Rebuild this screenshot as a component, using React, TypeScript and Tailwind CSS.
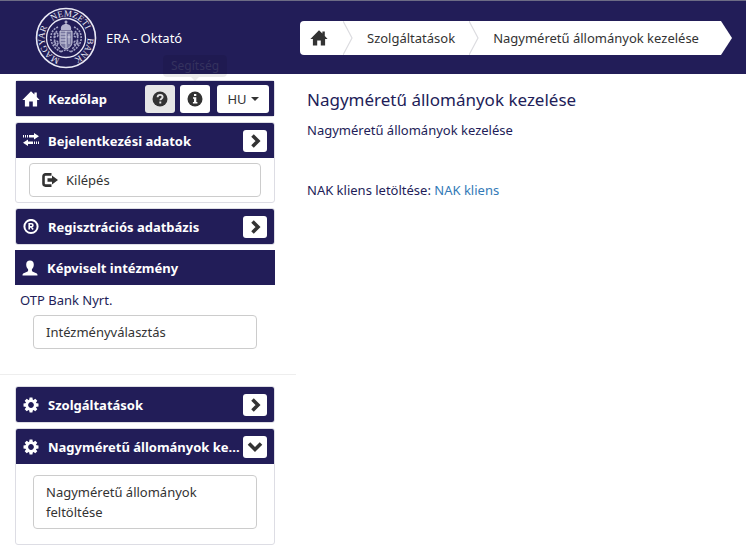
import type { ReactNode } from "react";

type IconProps = { className?: string };

function HomeIcon({ className = "" }: IconProps) {
  return (
    <svg viewBox="0 0 18 16" className={`h-4 w-[18px] shrink-0 ${className}`} fill="currentColor" aria-hidden="true">
      <path d="M9 0.3 0.4 9h2.5v6.600h4.300v-5.200h3.600v5.200h4.300V9h2.500L14.800 6V1.600h-2.400v2z" />
    </svg>
  );
}

function TransferIcon() {
  return (
    <svg viewBox="0 0 16 16" className="h-4 w-4 shrink-0" fill="currentColor" aria-hidden="true">
      <path d="M0 2h1v2.500H0zM2 2h1v2.500H2zM4 2h1v2.500H4zM6 2h5V0l5 3.200-5 3.300v-2H6zM16 8.500h-1V11h1zM14 8.500h-1V11h1zM12 8.500h-1V11h1zM10 8.500H5v-2L0 9.800 5 13v-2h5z" />
    </svg>
  );
}

function RegisteredIcon() {
  return (
    <svg viewBox="0 0 16 16" className="h-4 w-4 shrink-0" aria-hidden="true">
      <circle cx="8" cy="7.500" r="6.600" fill="none" stroke="currentColor" strokeWidth="2" />
      <path d="M6.200 10.500V4.800h2.200a1.500 1.500 0 0 1 0 3.100H6.200M8.200 7.900l1.900 2.600" fill="none" stroke="currentColor" strokeWidth="1.600" />
    </svg>
  );
}

function UserIcon() {
  return (
    <svg viewBox="0 0 16 16" className="h-4 w-4 shrink-0" fill="currentColor" aria-hidden="true">
      <path d="M8 .5c2.400 0 3.800 1.600 3.800 4 0 2-.7 3.600-1.900 4.800v1.200c0 .7.4 1 1 1.300l3.400 1.500c.8.4 1.200.9 1.200 2.200H.5c0-1.300.4-1.800 1.200-2.200l3.400-1.500c.6-.3 1-.6 1-1.300V9.300C4.900 8.100 4.200 6.500 4.200 4.500c0-2.400 1.400-4 3.800-4z" />
    </svg>
  );
}

function CogIcon() {
  return (
    <svg viewBox="-8 -8 16 16" className="h-4 w-4 shrink-0" aria-hidden="true">
      <g fill="currentColor">
        <path d="M-1.400-7.500h2.800l.6 3h-4zM-1.400 7.500h2.800l.6-3h-4z" />
        <path d="M-1.400-7.500h2.800l.6 3h-4zM-1.400 7.500h2.800l.6-3h-4z" transform="rotate(45)" />
        <path d="M-1.400-7.500h2.800l.6 3h-4zM-1.400 7.500h2.800l.6-3h-4z" transform="rotate(90)" />
        <path d="M-1.400-7.500h2.800l.6 3h-4zM-1.400 7.500h2.800l.6-3h-4z" transform="rotate(135)" />
      </g>
      <circle r="4.200" fill="none" stroke="currentColor" strokeWidth="2.600" />
    </svg>
  );
}

function LogoutIcon() {
  return (
    <svg viewBox="0 0 16 14" className="h-[14px] w-4 shrink-0" aria-hidden="true">
      <path d="M9.500 1.400H3.500a2 2 0 0 0-2 2v7.200a2 2 0 0 0 2 2h6" fill="none" stroke="currentColor" strokeWidth="2.600" />
      <path d="M5.500 5.200H10V2.500L16 7l-6 4.500V8.800H5.500z" fill="currentColor" />
    </svg>
  );
}

function QuestionIcon() {
  return (
    <svg viewBox="0 0 16 16" className="h-4 w-4" aria-hidden="true">
      <circle cx="8" cy="8" r="7.500" fill="currentColor" />
      <path d="M5.600 6.300c0-1.600 1-2.400 2.500-2.400s2.500.8 2.500 2.100c0 1.600-2.300 1.700-2.300 3.300M8.300 10.500v1.900" fill="none" stroke="#e6e6e6" strokeWidth="1.900" />
    </svg>
  );
}

function InfoIcon() {
  return (
    <svg viewBox="0 0 16 16" className="h-4 w-4" aria-hidden="true">
      <circle cx="8" cy="8" r="7.500" fill="currentColor" />
      <path d="M7 3h2.300v2H7zM6 6.300h3.300v4.600h1.100v1.500H5.900v-1.500H7V7.800H6z" fill="#fff" />
    </svg>
  );
}

function ChevronIcon({ open }: { open: boolean }) {
  return (
    <svg viewBox="0 0 16 16" className="h-4 w-4" aria-hidden="true">
      <path
        d={open ? "M2 4.500 8 10.500l6-6" : "M5.500 2.500l5.500 5.500-5.500 5.500"}
        fill="none"
        stroke="currentColor"
        strokeWidth="3.600"
      />
    </svg>
  );
}

function Seal() {
  return (
    <svg viewBox="0 0 62 62" className="h-[62px] w-[62px] shrink-0" role="img" aria-label="Magyar Nemzeti Bank">
      <defs>
        <path id="ring" d="M31 52.500a21.500 21.500 0 1 1 .01 0" />
      </defs>
      <g fill="none" stroke="#e9e9f5">
        <circle cx="31" cy="31" r="29.500" strokeWidth="1.600" />
        <circle cx="31" cy="31" r="19.500" strokeWidth="1.300" />
      </g>
      <g fill="#ececf6" fontSize="9" className="font-['Liberation_Serif',serif]">
        <text><textPath href="#ring" startOffset="6">MAGYAR</textPath></text>
        <text><textPath href="#ring" startOffset="53">NEMZETI</textPath></text>
        <text><textPath href="#ring" startOffset="101">BANK</textPath></text>
      </g>
      <g fill="none" stroke="#a5a4c6" strokeWidth="1.600" strokeDasharray="2 1">
        <path d="M23 20c-5 2-8 7-7 13 1 5 5 10 11 12" />
        <path d="M39 20c5 2 8 7 7 13-1 5-5 10-11 12" />
        <path d="M22 24c-4 4-4 12 3 18M40 24c4 4 4 12-3 18" />
        <circle cx="21" cy="28" r="2" />
        <circle cx="41" cy="28" r="2" />
        <circle cx="21" cy="36" r="2" />
        <circle cx="41" cy="36" r="2" />
        <path d="M26 45q5-4 10 0" />
      </g>
      <path d="M25 24h12v11c0 4-3 6-6 7-3-1-6-3-6-7z" fill="#77769f" stroke="#d2d2e4" />
      <path d="M25.500 27H31M25.500 30H31M25.500 33H31M26 36h5M31 24v17M34 27v10M32.500 30h3" stroke="#d2d2e4" />
      <path d="M26 23c-1-4 2-6 5-6s6 2 5 6z" fill="#b4b3ce" />
      <path d="M31 13.500v4M29.500 15h3" stroke="#dcdcec" />
    </svg>
  );
}

function Divider() {
  return (
    <svg viewBox="0 0 10 34" className="h-[34px] w-[10px] shrink-0" aria-hidden="true">
      <path d="M0 0l9 17-9 17" fill="none" stroke="#dcdce0" strokeWidth="1.200" />
    </svg>
  );
}

function BarTitle({ icon, children }: { icon: ReactNode; children: ReactNode }) {
  return (
    <>
      <span className="flex w-[18px] shrink-0 justify-center">{icon}</span>
      <h2 className="ml-2 min-w-0 flex-1 font-bold whitespace-nowrap">{children}</h2>
    </>
  );
}

const bar = "flex h-[35px] items-center bg-[#221d58] pl-1.5 text-white";

type PanelProps = { icon: ReactNode; title: string; open?: boolean; children?: ReactNode };

function Panel({ icon, title, open = false, children }: PanelProps) {
  return (
    <section className="overflow-hidden rounded-[3px] border border-[#dddde4]">
      <div className={`${bar} pr-[7px]`}>
        <BarTitle icon={icon}>{title}</BarTitle>
        <button
          type="button"
          aria-label={title}
          aria-expanded={open}
          className="flex h-[22px] w-6 shrink-0 items-center justify-center rounded-[3px] bg-white text-[#333]"
        >
          <ChevronIcon open={open} />
        </button>
      </div>
      {children}
    </section>
  );
}

const menuButton =
  "flex w-full items-center gap-2 rounded border border-[#ccc] bg-white px-3 py-1.5 text-left leading-5 text-[#333]";

export default function App() {
  return (
    <div className="min-h-screen bg-white font-['Noto_Sans','Open_Sans',sans-serif] text-[13px] leading-5 text-[#221d58]">
      <header className="flex h-[74px] items-center border-t border-[#6d6c85] bg-[#221d58]">
        <div className="flex w-[300px] shrink-0 items-center gap-[9px] pl-[35px] text-white">
          <Seal />
          <span>ERA - Oktató</span>
        </div>
        <nav aria-label="breadcrumb">
          <ol className="flex h-[34px] items-center whitespace-nowrap text-[#333]">
            <li className="flex items-center rounded-l bg-white pl-2.5">
              <a href="#home" aria-label="Kezdőlap" className="pr-[15px]">
                <HomeIcon />
              </a>
              <Divider />
            </li>
            <li className="flex items-center bg-white pl-3.5">
              <a href="#services" className="pr-3.5">Szolgáltatások</a>
              <Divider />
            </li>
            <li className="flex items-center">
              <span className="flex h-[34px] items-center bg-white pr-[22px] pl-3.5">
                Nagyméretű állományok kezelése
              </span>
              <svg viewBox="0 0 11 34" className="h-[34px] w-[11px]" aria-hidden="true">
                <path d="M0 0l11 17L0 34z" fill="#fff" />
              </svg>
            </li>
          </ol>
        </nav>
      </header>

      <div className="flex items-start">
        <aside className="w-[296px] shrink-0 pt-1.5">
          <div className="flex flex-col gap-[5px] pr-[21px] pl-[15px]">
            <section className="rounded-[3px] border border-[#dddde4]">
              <div className={`${bar} pr-[5px]`}>
                <BarTitle icon={<HomeIcon />}>Kezdőlap</BarTitle>
                <div className="flex shrink-0">
                  <button
                    type="button"
                    aria-label="Kérdések"
                    className="flex h-7 w-[30px] items-center justify-center rounded-[3px] bg-[#e6e6e6] text-[#333]"
                  >
                    <QuestionIcon />
                  </button>
                  <div className="relative ml-[5px]">
                    <button
                      type="button"
                      aria-label="Segítség"
                      className="flex h-7 w-[30px] items-center justify-center rounded-[3px] bg-white text-[#333]"
                    >
                      <InfoIcon />
                    </button>
                    <div
                      role="tooltip"
                      className="absolute bottom-full left-1/2 mb-2 -translate-x-1/2 rounded bg-black/8 px-2 text-xs leading-[22px] text-[#35325f]"
                    >
                      Segítség
                      <span className="absolute top-full left-1/2 -translate-x-1/2 border-4 border-b-0 border-transparent border-t-black/8" />
                    </div>
                  </div>
                  <button
                    type="button"
                    className="ml-[7px] flex h-7 w-[52px] items-center justify-center gap-1 rounded-[3px] bg-white text-[#333]"
                  >
                    HU
                    <span className="border-4 border-b-0 border-transparent border-t-[#333]" />
                  </button>
                </div>
              </div>
            </section>

            <Panel icon={<TransferIcon />} title="Bejelentkezési adatok">
              <div className="px-[13px] py-[5px]">
                <button type="button" className={menuButton}>
                  <LogoutIcon />
                  Kilépés
                </button>
              </div>
            </Panel>

            <Panel icon={<RegisteredIcon />} title="Regisztrációs adatbázis" />

            <section>
              <div className={bar}>
                <BarTitle icon={<UserIcon />}>Képviselt intézmény</BarTitle>
              </div>
              <p className="px-[5px] pt-[5px]">OTP Bank Nyrt.</p>
              <div className="px-[18px] pt-[5px] pb-[25px]">
                <button type="button" className={menuButton}>Intézményválasztás</button>
              </div>
            </section>
          </div>

          <hr className="mb-[11px] border-[#eee]" />

          <div className="flex flex-col gap-[5px] pr-[21px] pl-[15px]">
            <Panel icon={<CogIcon />} title="Szolgáltatások" />
            <Panel icon={<CogIcon />} title="Nagyméretű állományok ke..." open>
              <div className="px-[17px] pt-[11px] pb-[15px]">
                <button type="button" className={menuButton}>
                  <span className="w-40">Nagyméretű állományok feltöltése</span>
                </button>
              </div>
            </Panel>
          </div>
        </aside>

        <main className="min-w-0 flex-1 pt-4 pr-4 pl-[11px]">
          <h1 className="text-[17px] leading-5">Nagyméretű állományok kezelése</h1>
          <p className="mt-2.5">Nagyméretű állományok kezelése</p>
          <p className="mt-10">
            NAK kliens letöltése: <a href="#nak" className="text-[#337ab7]">NAK kliens</a>
          </p>
        </main>
      </div>
    </div>
  );
}
